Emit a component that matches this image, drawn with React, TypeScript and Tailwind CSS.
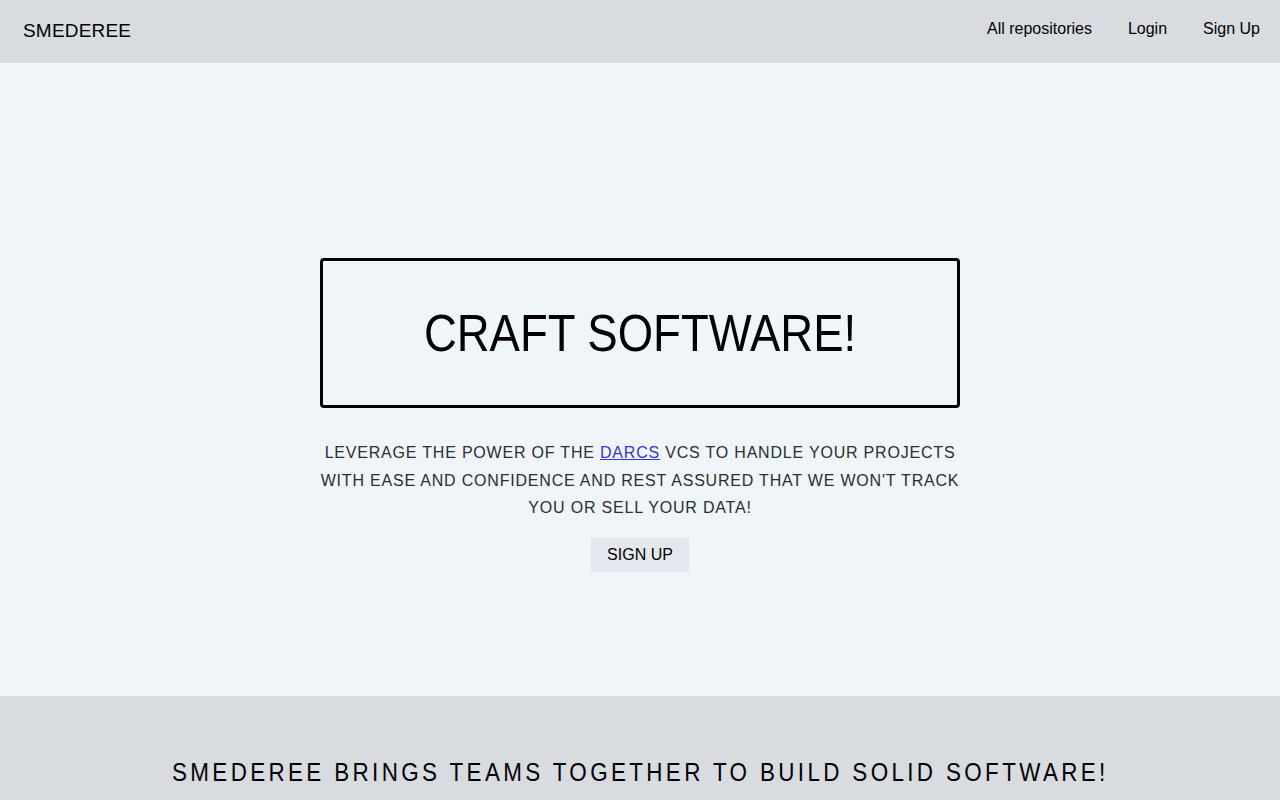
import React from "react";

export default function App() {
  return (
    <div className="min-h-[800px] w-full bg-[#f0f5f9] text-black" style={{ fontFamily: '"Liberation Sans", Arial, sans-serif' }}>
      <header className="flex h-[63px] items-start justify-between bg-[#d8dbe0] pl-[23px] pr-[20px]">
        <div className="pt-[20px] text-[19px] leading-[22px] tracking-[0.01em]">SMEDEREE</div>
        <nav className="flex gap-[36px] pt-[19px] text-[16px] leading-[20px]">
          <a href="#">All repositories</a>
          <a href="#">Login</a>
          <a href="#">Sign Up</a>
        </nav>
      </header>
      <main className="flex h-[633px] flex-col items-center pt-[195px]">
        <div className="flex h-[150px] w-[640px] items-center justify-center rounded-[4px] border-[3px] border-black">
          <h1 className="inline-block origin-center scale-x-[0.875] whitespace-nowrap text-[52px] leading-none">CRAFT SOFTWARE!</h1>
        </div>
        <p className="mt-[31px] w-[640px] text-center text-[16px] leading-[27.5px] tracking-[0.8px] text-[#2a2d34]">
          LEVERAGE THE POWER OF THE <a href="#" className="text-[#3535d0] underline">DARCS</a> VCS TO HANDLE YOUR PROJECTS WITH EASE AND CONFIDENCE AND REST ASSURED THAT WE WON'T TRACK YOU OR SELL YOUR DATA!
        </p>
        <button className="mt-[16px] flex h-[34px] w-[98px] items-center justify-center bg-[#e4e8ee] text-[16px]">
          SIGN UP
        </button>
      </main>
      <footer className="flex h-[104px] justify-center bg-[#d8dbe0] pt-[61px]">
        <h2 className="inline-block origin-center scale-x-[0.862] whitespace-nowrap text-[26px] leading-[30px] tracking-[3.9px]">SMEDEREE BRINGS TEAMS TOGETHER TO BUILD SOLID SOFTWARE!</h2>
      </footer>
    </div>
  );
}
